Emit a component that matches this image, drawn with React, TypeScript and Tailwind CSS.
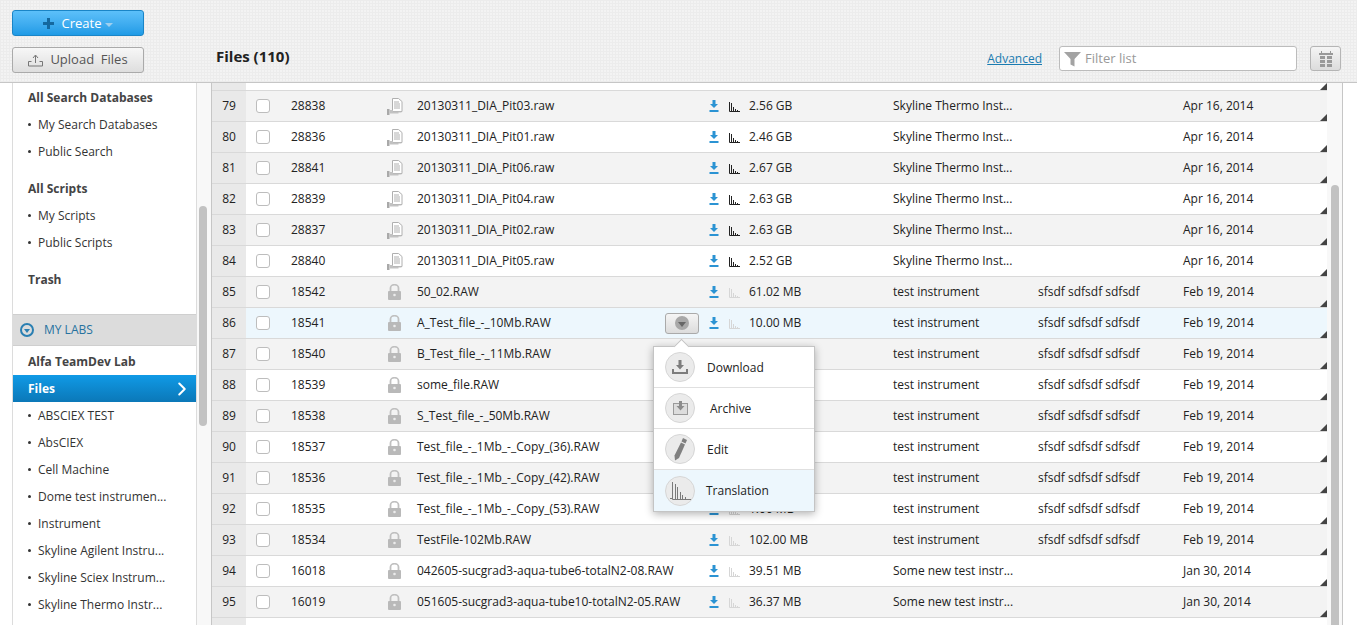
import { ChevronRight } from "lucide-react";

const thermo = "Skyline Thermo Inst...";
const test = "test instrument";
const tags = "sfsdf sdfsdf sdfsdf";

const rows = [
  { n: 79, id: "28838", name: "20130311_DIA_Pit03.raw", size: "2.56 GB", inst: thermo, tags: "", date: "Apr 16, 2014", doc: true },
  { n: 80, id: "28836", name: "20130311_DIA_Pit01.raw", size: "2.46 GB", inst: thermo, tags: "", date: "Apr 16, 2014", doc: true },
  { n: 81, id: "28841", name: "20130311_DIA_Pit06.raw", size: "2.67 GB", inst: thermo, tags: "", date: "Apr 16, 2014", doc: true },
  { n: 82, id: "28839", name: "20130311_DIA_Pit04.raw", size: "2.63 GB", inst: thermo, tags: "", date: "Apr 16, 2014", doc: true },
  { n: 83, id: "28837", name: "20130311_DIA_Pit02.raw", size: "2.63 GB", inst: thermo, tags: "", date: "Apr 16, 2014", doc: true },
  { n: 84, id: "28840", name: "20130311_DIA_Pit05.raw", size: "2.52 GB", inst: thermo, tags: "", date: "Apr 16, 2014", doc: true },
  { n: 85, id: "18542", name: "50_02.RAW", size: "61.02 MB", inst: test, tags, date: "Feb 19, 2014" },
  { n: 86, id: "18541", name: "A_Test_file_-_10Mb.RAW", size: "10.00 MB", inst: test, tags, date: "Feb 19, 2014", active: true },
  { n: 87, id: "18540", name: "B_Test_file_-_11Mb.RAW", size: "11.00 MB", inst: test, tags, date: "Feb 19, 2014" },
  { n: 88, id: "18539", name: "some_file.RAW", size: "1.00 MB", inst: test, tags, date: "Feb 19, 2014" },
  { n: 89, id: "18538", name: "S_Test_file_-_50Mb.RAW", size: "50.00 MB", inst: test, tags, date: "Feb 19, 2014" },
  { n: 90, id: "18537", name: "Test_file_-_1Mb_-_Copy_(36).RAW", size: "1.00 MB", inst: test, tags, date: "Feb 19, 2014" },
  { n: 91, id: "18536", name: "Test_file_-_1Mb_-_Copy_(42).RAW", size: "1.00 MB", inst: test, tags, date: "Feb 19, 2014" },
  { n: 92, id: "18535", name: "Test_file_-_1Mb_-_Copy_(53).RAW", size: "1.00 MB", inst: test, tags, date: "Feb 19, 2014" },
  { n: 93, id: "18534", name: "TestFile-102Mb.RAW", size: "102.00 MB", inst: test, tags, date: "Feb 19, 2014" },
  { n: 94, id: "16018", name: "042605-sucgrad3-aqua-tube6-totalN2-08.RAW", size: "39.51 MB", inst: "Some new test instr...", tags: "", date: "Jan 30, 2014" },
  { n: 95, id: "16019", name: "051605-sucgrad3-aqua-tube10-totalN2-05.RAW", size: "36.37 MB", inst: "Some new test instr...", tags: "", date: "Jan 30, 2014" },
];

const labItems = [
  "ABSCIEX TEST",
  "AbsCIEX",
  "Cell Machine",
  "Dome test instrumen...",
  "Instrument",
  "Skyline Agilent Instru...",
  "Skyline Sciex Instrum...",
  "Skyline Thermo Instr...",
];

function DownloadIcon() {
  return (
    <svg width="10" height="12" viewBox="0 0 10 12" className="text-[#2b93d3]">
      <path d="M3.5 0h3v4H9L5 8 1 4h2.500z" fill="currentColor" />
      <rect x="0.5" y="10" width="9" height="2" fill="currentColor" />
    </svg>
  );
}

function ChartIcon({ dark }: { dark?: boolean }) {
  return (
    <svg width="11" height="11" viewBox="0 0 11 11" className={dark ? "text-[#222]" : "text-[#d6d6d6]"}>
      <path d="M0.5 1v9.500H11M2.500 10V2M4.500 10V6M6.500 10V8M8.500 10V9" stroke="currentColor" fill="none" strokeWidth="1" />
    </svg>
  );
}

function DocIcon() {
  return (
    <svg width="16" height="17" viewBox="0 0 16 17">
      <path d="M5.500 0.500h6l3.500 3v10h-9.500z" fill="#fff" stroke="#b0b0b0" />
      <path d="M7 4h5M7 6h6M7 8h6M7 10h6" stroke="#b0b0b0" />
      <rect x="0" y="11" width="2.500" height="6" fill="#a9a9a9" />
      <path d="M2.500 12h3.500v1.500h8.500v1h-3v1h-9z" fill="#c2c2c2" />
    </svg>
  );
}

function LockIcon() {
  return (
    <svg width="13" height="16" viewBox="0 0 13 16" className="ml-[1px]">
      <path d="M2.500 7V4a4 3.300 0 0 1 8 0V7" fill="none" stroke="#c0c0c0" strokeWidth="1.800" />
      <rect x="0" y="7" width="13" height="9" rx="1" fill="#b9b9b9" />
      <circle cx="6.500" cy="11" r="1.300" fill="#ececec" />
    </svg>
  );
}

function Corner() {
  return <span className="absolute right-0 bottom-0 h-0 w-0 border-b-[7px] border-l-[7px] border-b-[#444] border-l-transparent" />;
}

function SideLink({ label }: { label: string }) {
  return (
    <div className="flex h-[27px] items-center pl-[15px] text-[12px] text-[#333]">
      <span className="mr-[6px] h-[3px] w-[3px] rounded-full bg-[#333]" />
      <span className="ml-[1px]">{label}</span>
    </div>
  );
}

function SideHead({ label }: { label: string }) {
  return <div className="flex h-[27px] items-center pl-[15px] text-[12px] font-bold text-[#444]">{label}</div>;
}

function Row({ row }: { row: (typeof rows)[number] }) {
  const bg = row.active ? "bg-[#edf7fd]" : row.n % 2 ? "bg-[#f3f3f3]" : "bg-white";
  return (
    <div className={`relative flex h-[31px] items-center border-b border-[#d9d9d9] text-[12px] text-[#222] ${bg}`}>
      <div className="flex h-full w-[34px] shrink-0 items-center justify-center bg-[#e9e9e9]">{row.n}</div>
      <div className="w-[45px] shrink-0 pl-[10px]">
        <div className="h-[14px] w-[14px] rounded-[3px] border border-[#bdbdbd] bg-white" />
      </div>
      <div className="w-[96px] shrink-0">{row.id}</div>
      <div className="flex w-[30px] shrink-0">{row.doc ? <DocIcon /> : <LockIcon />}</div>
      <div className="w-[248px] shrink-0 whitespace-nowrap">{row.name}</div>
      <div className="w-[44px] shrink-0">
        {row.active && (
          <div className="flex h-[21px] w-[34px] items-center justify-center rounded-[3px] border border-[#aaa] bg-gradient-to-b from-[#f5f5f5] to-[#dcdcdc]">
            <span className="flex h-[14px] w-[14px] items-center justify-center rounded-full bg-[#a8a8a8]">
              <span className="mt-[2px] h-0 w-0 border-x-[4px] border-t-[5px] border-x-transparent border-t-[#666]" />
            </span>
          </div>
        )}
      </div>
      <div className="flex w-[20px] shrink-0">
        <DownloadIcon />
      </div>
      <div className="flex w-[20px] shrink-0">
        <ChartIcon dark={row.doc} />
      </div>
      <div className="w-[144px] shrink-0">{row.size}</div>
      <div className="w-[145px] shrink-0">{row.inst}</div>
      <div className="w-[145px] shrink-0">{row.tags}</div>
      <div className="flex-1">{row.date}</div>
      <Corner />
    </div>
  );
}

function MenuItem({ label, icon, offset, active }: { label: string; icon: React.ReactNode; offset: string; active?: boolean }) {
  return (
    <div className={`flex h-[41px] items-center border-b border-[#e0e0e0] pl-[11px] text-[12px] text-[#222] last:border-b-0 ${active ? "bg-[#edf7fd]" : ""}`}>
      <span className="flex h-[30px] w-[30px] shrink-0 items-center justify-center rounded-full border border-[#d6d6d6] bg-[#ebebeb]">{icon}</span>
      <span className={offset}>{label}</span>
    </div>
  );
}

function ActionMenu() {
  return (
    <div className="absolute top-[263px] left-[441px] z-10 w-[162px] border border-[#c4c4c4] bg-white shadow-[0_2px_8px_rgba(0,0,0,0.3)]">
      <span className="absolute -top-[6px] left-[22px] h-[11px] w-[11px] rotate-45 border-t border-l border-[#c4c4c4] bg-white" />
      <div className="relative">
        <MenuItem
          label="Download"
          offset="mt-[2px] ml-[12px]"
          icon={
            <svg width="16" height="14" viewBox="0 0 16 14" fill="#7d7d7d">
              <path d="M6.500 0h3v5H12L8 9.500 4 5h2.500z" />
              <path d="M0 9h2v3h12V9h2v5H0z" />
            </svg>
          }
        />
        <MenuItem
          label="Archive"
          offset="mt-[2px] ml-[15px]"
          icon={
            <svg width="15" height="14" viewBox="0 0 15 14">
              <rect x="0.500" y="2.500" width="14" height="11" fill="#dcdcdc" stroke="#9a9a9a" />
              <path d="M6 0h3v5h2.500L7.500 9.500 3.500 5H6z" fill="#8c8c8c" />
            </svg>
          }
        />
        <MenuItem
          label="Edit"
          offset="mt-[2px] ml-[12px]"
          icon={
            <svg width="15" height="24" viewBox="0 0 15 24" fill="#808080">
              <path d="M10 1l4 2-1.500 3.500-4-2z" />
              <path d="M8 5.500l4 2L6 21l-4 2.500-.5-5z" />
            </svg>
          }
        />
        <MenuItem
          label="Translation"
          offset="ml-[11px]"
          active
          icon={
            <svg width="21" height="20" viewBox="0 0 21 20" fill="none" stroke="#7a7a7a">
              <path d="M2.500 1v17.500H21M0 17.500h3M5.500 18V3M7.500 18V6M10.500 18V11M12.500 18v-4M15.500 18v-2" />
            </svg>
          }
        />
      </div>
    </div>
  );
}

export default function App() {
  return (
    <div className="flex h-[625px] flex-col overflow-hidden bg-white font-['Open_Sans',sans-serif]">
      <header className="flex h-[83px] shrink-0 border-b border-[#c6c6c6] bg-[#f3f3f3] bg-[linear-gradient(#ececec_1px,transparent_1px),linear-gradient(90deg,#ececec_1px,transparent_1px)] bg-[length:3px_3px]">
        <div className="flex w-[212px] shrink-0 flex-col gap-[11px] pt-[10px] pl-[12px]">
          <button className="flex h-[26px] w-[132px] items-center justify-center rounded-[3px] border border-[#1a85c7] bg-gradient-to-b from-[#5cc0fa] to-[#1e9be6] pt-[1px] text-[13px] text-white">
            <svg width="11" height="11" viewBox="0 0 11 11" fill="#15689f" className="mr-[8px]">
              <path d="M4 0h3v4h4v3H7v4H4V7H0V4h4z" />
            </svg>
            Create
            <span className="mt-[2px] ml-[4px] h-0 w-0 border-x-[4.500px] border-t-[4px] border-x-transparent border-t-[#9fd0ef]" />
          </button>
          <button className="flex h-[26px] w-[132px] items-center justify-center rounded-[3px] border border-[#aaa] bg-gradient-to-b from-[#f7f7f7] to-[#dedede] text-[13px] text-[#555]">
            <svg width="15" height="13" viewBox="0 0 15 13" fill="none" stroke="#777" className="mr-[7px]">
              <path d="M7.500 9V1.500M5 4l2.500-3L10 4" />
              <path d="M3.500 7.500H.5v4.500h14v-4.500h-3" />
            </svg>
            Upload&nbsp; Files
          </button>
        </div>
        <div className="flex flex-1 items-start pt-[46px] pr-[16px] pl-[4px]">
          <h1 className="mt-[-2px] flex-1 text-[15px] leading-[24px] font-bold text-[#222]">Files (110)</h1>
          <a className="mt-[1px] mr-[17px] text-[12px] leading-[24px] text-[#1a7bb0] underline">Advanced</a>
          <div className="flex h-[25px] w-[238px] items-center rounded-[3px] border border-[#bcbcbc] bg-white pl-[4px] text-[13px] text-[#999]">
            <svg width="17" height="16" viewBox="0 0 17 16" fill="#a3a3a3" className="mr-[4px]">
              <path d="M0 1h17l-6.500 7v7.500l-4-2V8z" />
            </svg>
            Filter list
          </div>
          <button className="ml-[13px] flex h-[25px] w-[31px] items-center justify-center rounded-[3px] border border-[#b5b5b5] bg-gradient-to-b from-[#f5f5f5] to-[#dcdcdc]">
            <svg width="14" height="16" viewBox="0 0 14 16" fill="#999">
              <path d="M2 0h1v2H2zM11 0h1v2h-1zM0 2h14v2H0z" />
              <path d="M1 5h5v3H1zM8 5h5v3H8zM1 9h5v3H1zM8 9h5v3H8zM1 13h5v3H1zM8 13h5v3H8z" />
            </svg>
          </button>
        </div>
      </header>

      <div className="relative flex flex-1 overflow-hidden">
        <aside className="relative ml-[12px] w-[200px] shrink-0 border-r border-[#c6c6c6] bg-[#f8f8f8]">
          <div className="h-full w-[185px] border-x border-[#dcdcdc] bg-white pt-[1px]">
            <SideHead label="All Search Databases" />
            <SideLink label="My Search Databases" />
            <SideLink label="Public Search" />
            <div className="h-[10px]" />
            <SideHead label="All Scripts" />
            <SideLink label="My Scripts" />
            <SideLink label="Public Scripts" />
            <div className="h-[10px]" />
            <SideHead label="Trash" />
            <div className="mt-[21px] flex h-[32px] items-center border-y border-[#cfcfcf] bg-[#dcdcdc] pl-[7px] text-[12px] text-[#27729f]">
              <span className="mr-[10px] flex h-[14px] w-[14px] items-center justify-center rounded-full border-2 border-[#2a7fb2]">
                <span className="mt-[1px] h-0 w-0 border-x-[3px] border-t-[4px] border-x-transparent border-t-[#2a7fb2]" />
              </span>
              MY LABS
            </div>
            <div className="flex h-[29px] items-center pt-[3px] pl-[15px] text-[12px] font-bold text-[#444]">Alfa TeamDev Lab</div>
            <div className="flex h-[27px] items-center justify-between bg-gradient-to-b from-[#109ae6] to-[#0b78b8] pr-[3px] pl-[15px] text-[12px] font-bold text-white">
              Files
              <ChevronRight size={22} strokeWidth={2.2} />
            </div>
            <div>
              {labItems.map((item) => (
                <SideLink key={item} label={item} />
              ))}
            </div>
          </div>
          <span className="absolute top-[123px] left-[187px] h-[220px] w-[8px] rounded-full bg-[#c2c2c2]" />
        </aside>

        <main className="relative w-[1115px] shrink-0">
          <div className="relative h-[8px] border-b border-[#d9d9d9] bg-white">
            <div className="h-full w-[34px] bg-[#e9e9e9]" />
            <Corner />
          </div>
          {rows.map((row) => (
            <Row key={row.n} row={row} />
          ))}
          <div className="flex h-[8px] overflow-hidden bg-white">
            <div className="h-full w-[34px] bg-[#e9e9e9]" />
            <div className="ml-[141px] pt-[7px]">
              <LockIcon />
            </div>
          </div>
          <ActionMenu />
        </main>

        <div className="relative w-[16px] shrink-0 border-r border-[#c6c6c6] bg-[#f8f8f8]">
          <span className="absolute top-[102px] left-[4px] h-[460px] w-[8px] rounded-full bg-[#c2c2c2]" />
        </div>
      </div>
    </div>
  );
}
